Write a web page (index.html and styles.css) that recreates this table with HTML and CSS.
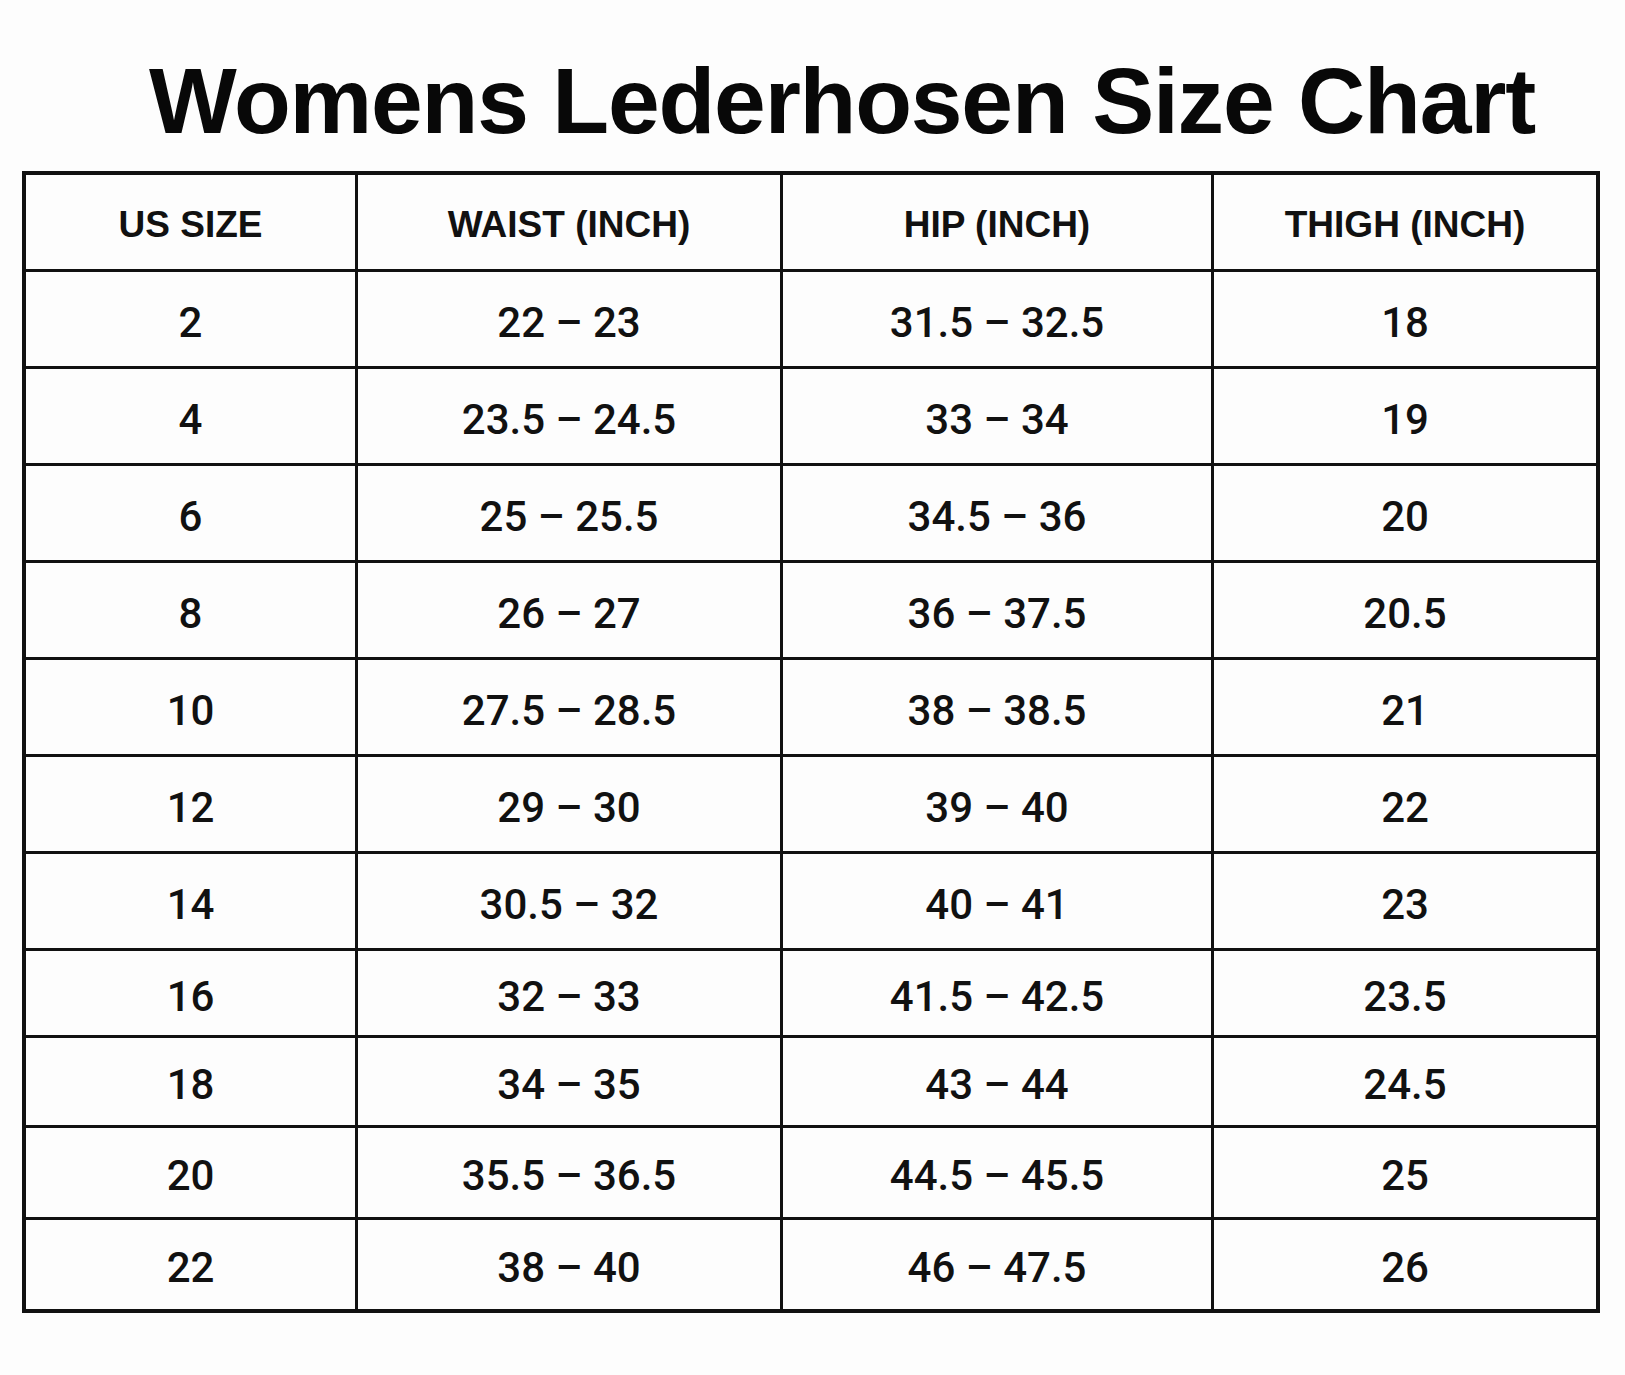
FILE: index.html
```html
<!DOCTYPE html>
<html lang="en">
<head>
<meta charset="utf-8">
<title>Womens Lederhosen Size Chart</title>
<link rel="stylesheet" href="styles.css">
</head>
<body>
<h1 class="title">Womens Lederhosen Size Chart</h1>
<div class="chart" role="table">
  <div class="cell head">US SIZE</div>
  <div class="cell head">WAIST (INCH)</div>
  <div class="cell head">HIP (INCH)</div>
  <div class="cell head">THIGH (INCH)</div>

  <div class="cell">2</div><div class="cell">22 – 23</div><div class="cell">31.5 – 32.5</div><div class="cell">18</div>
  <div class="cell">4</div><div class="cell">23.5 – 24.5</div><div class="cell">33 – 34</div><div class="cell">19</div>
  <div class="cell">6</div><div class="cell">25 – 25.5</div><div class="cell">34.5 – 36</div><div class="cell">20</div>
  <div class="cell">8</div><div class="cell">26 – 27</div><div class="cell">36 – 37.5</div><div class="cell">20.5</div>
  <div class="cell">10</div><div class="cell">27.5 – 28.5</div><div class="cell">38 – 38.5</div><div class="cell">21</div>
  <div class="cell">12</div><div class="cell">29 – 30</div><div class="cell">39 – 40</div><div class="cell">22</div>
  <div class="cell">14</div><div class="cell">30.5 – 32</div><div class="cell">40 – 41</div><div class="cell">23</div>
  <div class="cell">16</div><div class="cell">32 – 33</div><div class="cell">41.5 – 42.5</div><div class="cell">23.5</div>
  <div class="cell">18</div><div class="cell">34 – 35</div><div class="cell">43 – 44</div><div class="cell">24.5</div>
  <div class="cell">20</div><div class="cell">35.5 – 36.5</div><div class="cell">44.5 – 45.5</div><div class="cell">25</div>
  <div class="cell">22</div><div class="cell">38 – 40</div><div class="cell">46 – 47.5</div><div class="cell">26</div>
</div>
</body>
</html>
```
FILE: styles.css
```css
html, body {
  margin: 0;
  padding: 0;
  background: #fdfdfd;
}

body {
  width: 1625px;
  min-height: 1375px;
  font-family: "Liberation Sans", Arial, sans-serif;
  color: #0c0c0c;
}

.title {
  margin: 55px 0 23px 0;
  padding-left: 59px;
  text-align: center;
  font-family: "Liberation Sans", Arial, sans-serif;
  font-weight: 700;
  font-size: 93px;
  line-height: 93px;
  letter-spacing: -1.2px;
  color: #080808;
}

.chart {
  display: grid;
  grid-template-columns: 329px 422px 428px 382px;
  grid-template-rows: 94px repeat(7, 94px) 84px 87px 89px 89px;
  gap: 3px;
  width: max-content;
  margin-left: 22px;
  background: #111;
  border: 4px solid #111;
}

.cell {
  display: flex;
  align-items: center;
  justify-content: center;
  background: #fdfdfd;
  padding-top: 6px;
  box-sizing: border-box;
  font-family: Roboto, "Liberation Sans", sans-serif;
  font-weight: 500;
  font-size: 42px;
  color: #111;
}

.cell.head {
  padding-top: 5px;
  font-family: "Liberation Sans", Arial, sans-serif;
  font-weight: 700;
  font-size: 37px;
}
```
